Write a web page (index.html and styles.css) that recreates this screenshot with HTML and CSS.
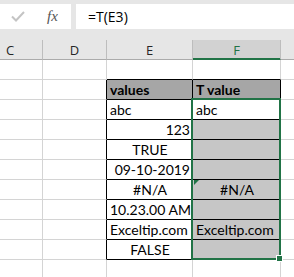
FILE: index.html
```html
<!DOCTYPE html>
<html>
<head>
  <title>T function</title>
  <link rel="stylesheet" href="styles.css">
</head>
<body>
  <div class="formula-bar">
    <div class="fx-box">
      <svg class="check" viewBox="0 0 14 11" width="14" height="11">
        <polyline points="1,5.5 5,9.5 13,1" fill="none" stroke="#c4c4c4" stroke-width="2"/>
      </svg>
      <span class="fx">fx</span>
    </div>
    <div class="formula">=T(E3)</div>
  </div>

  <div class="sheet">
    <table class="grid">
      <thead>
        <tr>
          <th class="col-c">C</th>
          <th class="col-d">D</th>
          <th class="col-e">E</th>
          <th class="col-f sel">F</th>
          <th class="col-g"></th>
        </tr>
      </thead>
      <tbody>
        <tr><td></td><td></td><td class="top"></td><td class="top"></td><td></td></tr>
        <tr><td></td><td class="edge"></td><td class="box head">values</td><td class="box head">T value</td><td></td></tr>
        <tr><td></td><td class="edge"></td><td class="box">abc</td><td class="box">abc</td><td></td></tr>
        <tr><td></td><td class="edge"></td><td class="box r">123</td><td class="box shade"></td><td></td></tr>
        <tr><td></td><td class="edge"></td><td class="box c">TRUE</td><td class="box shade"></td><td></td></tr>
        <tr><td></td><td class="edge"></td><td class="box r">09-10-2019</td><td class="box shade"></td><td></td></tr>
        <tr><td></td><td class="edge"></td><td class="box c">#N/A</td><td class="box shade c err">#N/A</td><td></td></tr>
        <tr><td></td><td class="edge"></td><td class="box r">10.23.00 AM</td><td class="box shade"></td><td></td></tr>
        <tr><td></td><td class="edge"></td><td class="box">Exceltip.com</td><td class="box shade">Exceltip.com</td><td></td></tr>
        <tr><td></td><td class="edge"></td><td class="box c">FALSE</td><td class="box shade"></td><td></td></tr>
        <tr><td></td><td></td><td></td><td></td><td></td></tr>
      </tbody>
    </table>
    <div class="selection"><span class="handle"></span></div>
  </div>
</body>
</html>
```

FILE: styles.css
```css
body {
  margin: 0;
  width: 294px;
  height: 277px;
  overflow: hidden;
  background: #fff;
  font-family: Lato, "Liberation Sans", sans-serif;
  color: #000;
}

/* formula bar */
.formula-bar {
  height: 40px;
  box-sizing: border-box;
  padding-top: 4px;
  background: #e6e6e6;
  display: flex;
  align-items: flex-start;
  gap: 5px;
}

.fx-box {
  width: 71px;
  height: 25px;
  box-sizing: border-box;
  padding-left: 11px;
  background: #fff;
  display: flex;
  align-items: center;
}

.check {
  display: block;
}

.fx {
  margin-left: 22px;
  font: italic 15px "Liberation Serif", serif;
  color: #555;
}

.formula {
  flex: 1;
  height: 25px;
  padding-left: 12px;
  background: #fff;
  font: 14px "Open Sans", sans-serif;
  line-height: 25px;
}

/* sheet */
.sheet {
  position: relative;
  overflow: hidden;
}

.grid {
  border-collapse: separate;
  border-spacing: 0;
  table-layout: fixed;
  width: 367px;
  margin-left: -22px;
}

.grid th {
  height: 19px;
  padding: 0;
  background: #e6e6e6;
  border-right: 1px solid #bdbdbd;
  border-bottom: 1px solid #ababab;
  font: 13px "Open Sans", sans-serif;
  color: #262626;
  text-align: center;
}

.col-c { width: 64px; }
.col-d { width: 63px; }
.col-e { width: 85px; }
.col-f { width: 87px; }
.col-g { width: 63px; }

.grid th.sel {
  background: #d2d2d2;
  color: #217346;
  border-bottom-color: #217346;
  box-shadow: inset 0 -1px #217346;
}

.grid td {
  height: 19px;
  padding: 0 2px 0 3px;
  border-right: 1px solid #d4d4d4;
  border-bottom: 1px solid #d4d4d4;
  font-size: 14px;
  line-height: 19px;
  vertical-align: bottom;
  white-space: nowrap;
  overflow: hidden;
}

.grid td.edge { border-right-color: #000; }
.grid td.top { border-bottom-color: #000; }
.grid td.box {
  border-right-color: #000;
  border-bottom-color: #000;
}

.grid td.head {
  background: #a6a6a6;
  font-weight: bold;
}

.grid td.shade { background: #c6c6c6; }
.r { text-align: right; }
.c { text-align: center; }

.grid td.err { position: relative; }
.grid td.err::before {
  content: "";
  position: absolute;
  left: 1px;
  top: 0;
  border-top: 5px solid #217346;
  border-right: 5px solid transparent;
}

/* selected range F3:F10 */
.selection {
  position: absolute;
  left: 191px;
  top: 58px;
  width: 90px;
  height: 162px;
  box-sizing: border-box;
  border: 2px solid #217346;
}

.handle {
  position: absolute;
  right: -4px;
  bottom: -4px;
  width: 5px;
  height: 5px;
  background: #217346;
  border: 1px solid #fff;
}
```
